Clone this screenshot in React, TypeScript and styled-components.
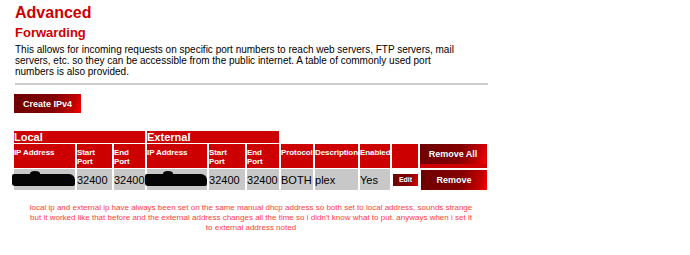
import styled, { createGlobalStyle } from 'styled-components'

const GlobalStyle = createGlobalStyle`
  body {
    margin: 0;
    background: #ffffff;
    font-family: 'Liberation Sans', Arial, Helvetica, sans-serif;
  }
`

interface ForwardRule {
  localStart: number
  localEnd: number
  externalStart: number
  externalEnd: number
  protocol: string
  description: string
  enabled: string
}

const rules: ForwardRule[] = [
  {
    localStart: 32400,
    localEnd: 32400,
    externalStart: 32400,
    externalEnd: 32400,
    protocol: 'BOTH',
    description: 'plex',
    enabled: 'Yes',
  },
]

const columnWidths = [61, 35, 31, 60, 36, 32, 32, 43, 30, 26, 67]

export default function App() {
  return (
    <>
      <GlobalStyle />
      <Page>
        <Title>Advanced</Title>
        <Subtitle>Forwarding</Subtitle>
        <Intro>
          This allows for incoming requests on specific port numbers to reach web servers, FTP
          servers, mail
          <br />
          servers, etc. so they can be accessible from the public internet. A table of commonly
          used port
          <br />
          numbers is also provided.
        </Intro>
        <Divider />
        <RedButton $w={67} $h={19} $size={9}>
          Create IPv4
        </RedButton>

        <RulesTable>
          <colgroup>
            {columnWidths.map((w, i) => (
              <col key={i} style={{ width: w }} />
            ))}
          </colgroup>
          <thead>
            <tr>
              <GroupCell colSpan={3}>Local</GroupCell>
              <GroupCell colSpan={3}>External</GroupCell>
              <BlankCell colSpan={5} />
            </tr>
            <tr>
              <HeadCell>IP Address</HeadCell>
              <HeadCell>
                Start
                <br />
                Port
              </HeadCell>
              <HeadCell>
                End
                <br />
                Port
              </HeadCell>
              <HeadCell>IP Address</HeadCell>
              <HeadCell>
                Start
                <br />
                Port
              </HeadCell>
              <HeadCell>
                End
                <br />
                Port
              </HeadCell>
              <HeadCell>Protocol</HeadCell>
              <HeadCell>Description</HeadCell>
              <HeadCell>Enabled</HeadCell>
              <HeadCell />
              <ActionHeadCell>
                <RedButton $w={66} $h={20} $size={9}>
                  Remove All
                </RedButton>
              </ActionHeadCell>
            </tr>
          </thead>
          <tbody>
            {rules.map((rule, i) => (
              <tr key={i}>
                <DataCell>
                  <Redacted />
                </DataCell>
                <DataCell>{rule.localStart}</DataCell>
                <DataCell>{rule.localEnd}</DataCell>
                <DataCell>
                  <Redacted />
                </DataCell>
                <DataCell>{rule.externalStart}</DataCell>
                <DataCell>{rule.externalEnd}</DataCell>
                <DataCell>{rule.protocol}</DataCell>
                <DataCell>{rule.description}</DataCell>
                <DataCell>{rule.enabled}</DataCell>
                <ActionCell>
                  <RedButton $w={25} $h={12} $size={7}>
                    Edit
                  </RedButton>
                </ActionCell>
                <ActionCell>
                  <RedButton $w={66} $h={20} $size={9}>
                    Remove
                  </RedButton>
                </ActionCell>
              </tr>
            ))}
          </tbody>
        </RulesTable>

        <Note>
          local ip and external ip have always been set on the same manual dhcp address so both set
          to local address, sounds strange
          <br />
          but it worked like that before and the external address changes all the time so i didn't
          know what to put. anyways when i set it
          <br />
          to external address noted
        </Note>
      </Page>
    </>
  )
}

const Page = styled.div`
  width: 474px;
  padding: 4px 0 0 14px;
`

const Title = styled.h1`
  margin: 0 0 0 1px;
  font-size: 16px;
  line-height: 18px;
  font-weight: bold;
  color: #cc0000;
`

const Subtitle = styled.h2`
  margin: 3px 0 0 1px;
  font-size: 13px;
  line-height: 15px;
  font-weight: bold;
  color: #cc0000;
`

const Intro = styled.p`
  margin: 4px 0 0 1px;
  font-size: 10px;
  line-height: 11px;
  color: #000000;
  white-space: nowrap;
`

const Divider = styled.div`
  margin: 6px 0 0 1px;
  height: 2px;
  background: #cccccc;
`

const RedButton = styled.button<{ $w: number; $h: number; $size: number }>`
  display: flex;
  align-items: center;
  justify-content: center;
  width: ${(p) => p.$w}px;
  height: ${(p) => p.$h}px;
  margin: 0;
  padding: 0;
  border: none;
  background: linear-gradient(105deg, #6e0000 0%, #850000 60%, #c40000 88%, #ff0000 100%);
  color: #ffffff;
  font-family: 'Liberation Sans', Arial, sans-serif;
  font-size: ${(p) => p.$size}px;
  font-weight: bold;
  text-shadow: 0 0 1px rgba(0, 0, 0, 0.4);

  ${Page} > & {
    margin-top: 9px;
  }
`

const RulesTable = styled.table`
  width: 477px;
  margin: 17px 0 0 -2px;
  table-layout: fixed;
  border-collapse: separate;
  border-spacing: 2px 1px;
  font-family: 'Liberation Sans', Arial, sans-serif;
`

const GroupCell = styled.th`
  height: 12px;
  padding: 0;
  background: #cc0000;
  color: #ffffff;
  font-size: 11px;
  line-height: 12px;
  font-weight: bold;
  text-align: left;
`

const BlankCell = styled.th`
  padding: 0;
`

const HeadCell = styled.th`
  height: 24px;
  padding: 4px 0 0 0;
  box-sizing: border-box;
  background: #cc0000;
  color: #ffffff;
  font-size: 8px;
  line-height: 9px;
  font-weight: bold;
  text-align: left;
  vertical-align: top;
  white-space: nowrap;
  letter-spacing: -0.1px;
  overflow: visible;
`

const ActionHeadCell = styled.th`
  height: 24px;
  padding: 0 0 3px 0;
  box-sizing: border-box;
  background: #cc0000;
  vertical-align: top;
`

const DataCell = styled.td`
  height: 21px;
  padding: 0;
  background: #c8c8c8;
  color: #000000;
  font-size: 11px;
  line-height: 12px;
  vertical-align: middle;
  white-space: nowrap;
  overflow: visible;
`

const ActionCell = styled.td`
  height: 21px;
  padding: 0;
  vertical-align: middle;

  & > button {
    margin: 0 auto 0 1px;
  }
`

const Redacted = styled.span`
  display: block;
  position: relative;
  margin-left: -2px;
  height: 12px;
  background: #050505;
  border-radius: 2px 6px 2px 3px;

  &::before {
    content: '';
    position: absolute;
    left: 18px;
    top: -3px;
    width: 10px;
    height: 5px;
    background: #050505;
    border-radius: 50% 50% 0 0;
  }
`

const Note = styled.p`
  margin: 12px 0 0 0;
  font-size: 8px;
  line-height: 10px;
  color: #ff3c3c;
  text-align: center;
`
